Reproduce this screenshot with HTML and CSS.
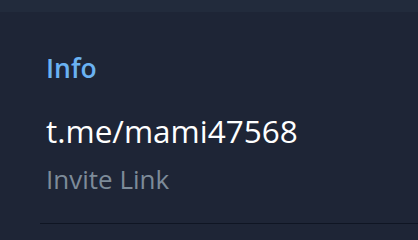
FILE: index.html
```html
<!DOCTYPE html>
<html lang="en">

<head>
  <meta charset="UTF-8" />
  <meta name="viewport" content="width=device-width, initial-scale=1.0" />
  <title>Info</title>
  <link rel="stylesheet" href="styles.css">
</head>

<body>
  <div class="top"></div>
  <div class="info">
    <h2 class="title">Info</h2>
    <div class="row">
      <div class="value">t.me/mami47568</div>
      <div class="label">Invite Link</div>
    </div>
    <div class="line"></div>
  </div>
</body>

</html>
```

FILE: styles.css
```css
* {
  margin: 0;
  padding: 0;
}

body {
  width: 418px;
  height: 240px;
  overflow: hidden;
  background: #1e2536;
  font-family: "Open Sans", "Noto Sans", sans-serif;
}

.top {
  height: 12px;
  background: #222b3c;
}

.info {
  padding-top: 38px;
}

.title {
  padding-left: 46px;
  font-size: 26.5px;
  line-height: 36px;
  font-weight: 600;
  color: #6ab2f2;
}

.row {
  padding: 24px 0 0 46px;
}

.value {
  font-size: 31.5px;
  line-height: 42px;
  color: #ffffff;
}

.label {
  margin-top: 9px;
  font-size: 26px;
  line-height: 36px;
  color: #7d8b99;
}

.line {
  margin: 26px 0 0 40px;
  height: 1px;
  background: #0f1523;
}
```
